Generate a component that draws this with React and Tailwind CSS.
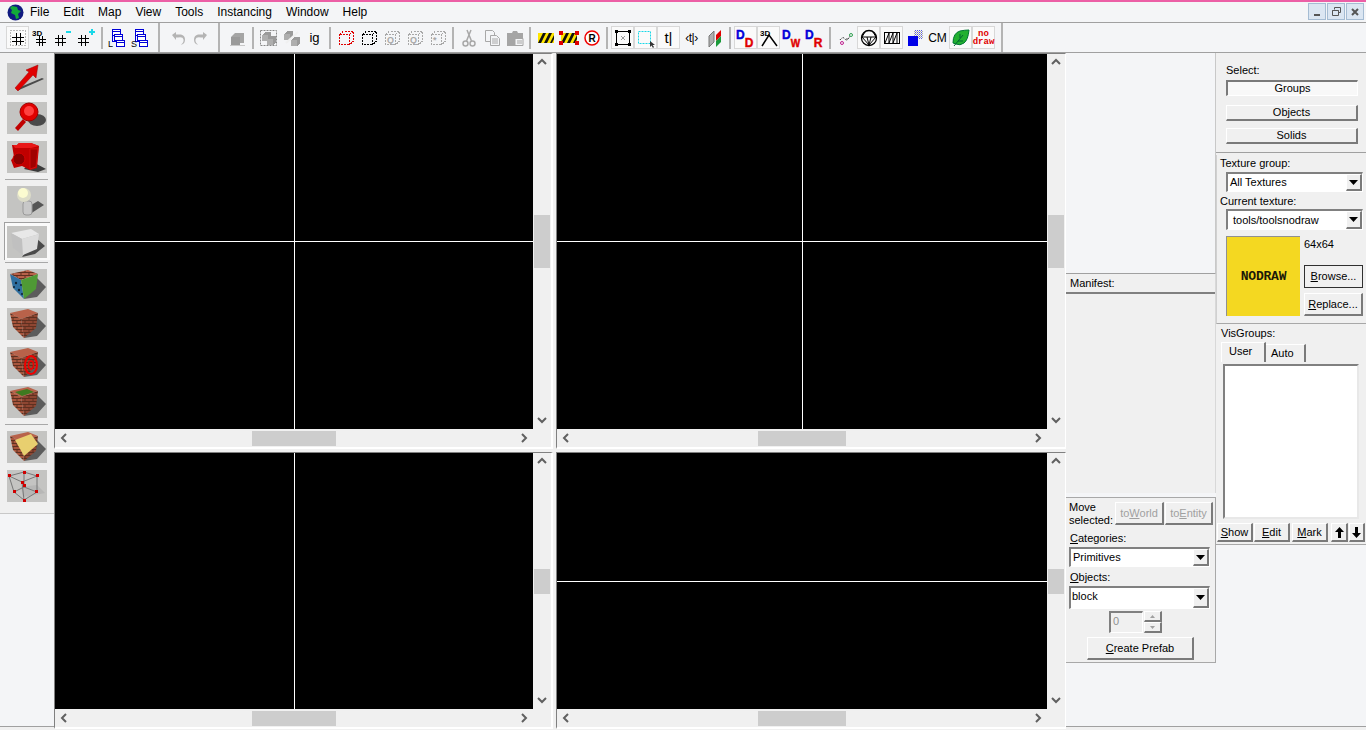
import React from 'react';

const raised = 'border-t border-l border-t-white border-l-white border-r-2 border-b-2 border-r-[#7a7a7a] border-b-[#7a7a7a] bg-[#f0f0f0]';
const sunken = 'border-t-2 border-l-2 border-t-[#808080] border-l-[#808080] border-r border-b border-r-white border-b-white';

/* ---------- small helpers for toolbar drawings ---------- */
const Svg = ({ children, w = 20, h = 20 }) => (
  <svg width={w} height={h} viewBox={`0 0 ${w} ${h}`}>{children}</svg>
);

const GridLines = ({ x = 4, y = 5, s = 12, c = '#000' }) => (
  <g stroke={c} strokeWidth="1" shapeRendering="crispEdges">
    <path d={`M${x} ${y + s / 3}h${s}M${x} ${y + (2 * s) / 3}h${s}M${x + s / 3} ${y}v${s}M${x + (2 * s) / 3} ${y}v${s}`} />
  </g>
);

const Stack = ({ letter }) => (
  <Svg>
    <g transform="translate(-2 0)">
      <g fill="#fff" stroke="#0000d8" strokeWidth="1" shapeRendering="crispEdges">
        <rect x="6.5" y="1.5" width="8" height="6" />
        <path d="M6.5 3.5h8" />
        <rect x="8.5" y="6.5" width="8" height="6" />
        <path d="M8.5 8.5h8" />
        <rect x="10.5" y="12.5" width="8" height="6" />
        <path d="M10.5 14.5h8" />
        <path d="M6.5 7.5v6h4" fill="none" />
      </g>
      <text x="2" y="19" fontSize="9" fontFamily="Liberation Sans" fill="#000">{letter}</text>
    </g>
  </Svg>
);

const DashCube = ({ c, mark }) => (
  <Svg>
    <g fill="none" stroke={c} strokeWidth="1.2" strokeDasharray="2 1" shapeRendering="crispEdges">
      <rect x="3.5" y="6.5" width="10" height="10" />
      <path d="M3.5 6.5l4-3h10v10l-4 3M13.5 6.5l4-3" />
    </g>
    {mark && <text x="5" y="15" fontSize="9" fontWeight="bold" fontFamily="Liberation Sans" fill={c}>{mark}</text>}
  </Svg>
);

const GrayCube = ({ x = 0, y = 0, c = '#9a9a9a' }) => (
  <g transform={`translate(${x} ${y})`} shapeRendering="crispEdges">
    <path d="M0 3l3-3h6v6l-3 3H0z" fill={c} />
    <path d="M0 3h6v6H0z" fill="#aeaeae" />
  </g>
);

const Pair = ({ top, bottom, size = 12 }) => (
  <svg width="20" height="20" viewBox="0 0 20 20" className="overflow-visible">
    <text x="0" y="11" fontSize="12" fontWeight="bold" fontFamily="Liberation Sans" fill="#0000d8" stroke="#0000d8" strokeWidth=".4">{top}</text>
    <text x="8.7" y="19" fontSize={size} fontWeight="bold" fontFamily="Liberation Sans" fill="#e00000" stroke="#e00000" strokeWidth=".4">{bottom}</text>
  </svg>
);

const Stripes = ({ corners }) => (
  <svg width="20" height="16" viewBox="0 0 20 16">
    <rect x="2" y="3" width="16" height="10" fill="#ffe600" />
    <path d="M2 13l5-10h3l-5 10zM8 13l5-10h3l-5 10zM14 13l4-8v4l-2 4z" fill="#111" />
    {corners && (
      <g fill="#e00000">
        <rect x="0" y="1" width="4" height="4" />
        <rect x="16" y="1" width="4" height="4" />
        <rect x="0" y="11" width="4" height="4" />
        <rect x="16" y="11" width="4" height="4" />
      </g>
    )}
  </svg>
);

const Text = ({ children, cls = 'text-[14px]' }) => (
  <span className={`${cls} leading-none text-black`}>{children}</span>
);

const TOOLBAR = [
  { pressed: true, el: <Svg><rect x="2.5" y="2.5" width="15" height="15" fill="none" stroke="#777" strokeDasharray="1 2" /><GridLines /></Svg> },
  { el: <Svg><text x="1" y="8" fontSize="8" fontWeight="bold" fontFamily="Liberation Sans">3D</text><GridLines x={5} y={8} s={10} /></Svg> },
  { el: <Svg><GridLines x={1} y={7} s={11} /><rect x="12" y="3" width="5" height="2" fill="#19d8e8" /></Svg> },
  { el: <Svg><GridLines x={1} y={7} s={11} /><path d="M12 4h6M15 1v6" stroke="#19d8e8" strokeWidth="2" /></Svg> },
  'sep',
  { el: <Stack letter="L" /> },
  { el: <Stack letter="S" /> },
  'bar',
  { el: <Svg><path d="M4 7l4-3v2.5h5q4 1 4 5t-3 5h-1q3-2 2.500-5T10 9.500H8V12z" fill="#b4b4b4" /></Svg> },
  { el: <Svg><path d="M16 7l-4-3v2.500H7q-4 1-4 5t3 5h1q-3-2-2.500-5T10 9.500h2V12z" fill="#b4b4b4" /></Svg> },
  'bar',
  { el: <Svg><path d="M3 9l4-4h9v10H3z" fill="#a5a5a5" /><path d="M3 9h9v8H3z" fill="#9a9a9a" /><path d="M2 17h15v1H2z" fill="#c8c8c8" /></Svg> },
  'sep',
  { el: <Svg><rect x="1.500" y="2.500" width="16" height="15" fill="none" stroke="#888" strokeDasharray="2 1" /><GrayCube x={3} y={4} /><GrayCube x={8} y={8} /></Svg> },
  { el: <Svg><GrayCube x={2} y={3} /><GrayCube x={9} y={9} /><path d="M4 15l12-11" stroke="#f0f0f0" strokeWidth="2" /></Svg> },
  { el: <Text cls="text-[13px] font-['Liberation_Sans']">ig</Text> },
  'sep',
  { el: <DashCube c="#e00000" /> },
  { el: <DashCube c="#000" /> },
  { el: <DashCube c="#a8a8a8" mark="Q" /> },
  { el: <DashCube c="#a8a8a8" mark="Q" /> },
  { el: <DashCube c="#a8a8a8" mark="*" /> },
  'sep',
  { el: <Svg><g fill="none" stroke="#a8a8a8" strokeWidth="1.500"><circle cx="6.500" cy="15.500" r="2.500" /><circle cx="13.500" cy="15.500" r="2.500" /><path d="M7.500 13L12 2M12.500 13L8 2" /></g></Svg> },
  { el: <Svg><g fill="#f4f5f7" stroke="#a8a8a8"><path d="M3.500 2.500h7l2 2v9h-9z" /><path d="M8.500 7.500h6l3 3v7h-9z" /><path d="M10 11h6M10 13h6M10 15h6" /></g></Svg> },
  { el: <Svg><path d="M2 5h5l1-2h4l1 2h5v13H2z" fill="#a5a5a5" /><path d="M10 10.500h8v7h-8z" fill="#f4f5f7" stroke="#a5a5a5" /><path d="M12 13h5M12 15h5" stroke="#a5a5a5" /></Svg> },
  'sep',
  { el: <Stripes /> },
  { el: <Stripes corners /> },
  { el: <Svg><circle cx="10" cy="10" r="7" fill="#fff" stroke="#f00000" strokeWidth="1.500" /><text x="6.500" y="13.500" fontSize="10" fontWeight="bold" fontFamily="Liberation Sans">R</text></Svg> },
  'sep',
  { pressed: true, el: <Svg><rect x="3.500" y="3.500" width="13" height="13" fill="none" stroke="#000" /><g fill="#000"><rect x="2" y="2" width="3" height="3" /><rect x="15" y="2" width="3" height="3" /><rect x="2" y="15" width="3" height="3" /><rect x="15" y="15" width="3" height="3" /></g><path d="M8 8l4 4M12 8l-4 4" stroke="#999" /></Svg> },
  { pressed: true, el: <Svg><rect x="2.500" y="3.500" width="12" height="12" fill="none" stroke="#19d8e8" strokeDasharray="2 1" /><path d="M14 13v6l1.500-1.500L17 20l1-1-1.500-2H19z" fill="#333" /></Svg> },
  { pressed: true, el: <Text cls="text-[15px] font-['Liberation_Sans']">t|</Text> },
  { el: <Text cls="text-[12px] font-['Liberation_Sans'] tracking-[-0.5px]">‹t|›</Text> },
  { el: <Svg><path d="M4 8l5-5v11l-5 5z" fill="#b0b0b0" stroke="#777" /><path d="M11 7l5-5v6l-5 5z" fill="#e00000" /><path d="M11 13l5-5v6l-5 5z" fill="#1a9a3a" /></Svg> },
  'sep',
  { pressed: true, el: <Pair top="D" bottom="D" /> },
  { pressed: true, el: <Svg><text x="1" y="8" fontSize="8" fontWeight="bold" fontFamily="Liberation Sans">3D</text><path d="M3 18l7-11 8 11" fill="none" stroke="#000" strokeWidth="1.500" /></Svg> },
  { el: <Pair top="D" bottom="W" size={10} /> },
  { el: <Pair top="D" bottom="R" /> },
  'sep',
  { el: <Svg><path d="M4 12q3-4 5-1t5-3" fill="none" stroke="#000" strokeDasharray="1 1" /><circle cx="6" cy="15" r="1.500" fill="none" stroke="#c02090" /><circle cx="15" cy="7" r="1.500" fill="none" stroke="#2fa050" /><circle cx="11" cy="11" r="1" fill="#888" /></Svg> },
  { pressed: true, el: <Svg><circle cx="10" cy="10" r="7.500" fill="none" stroke="#000" strokeWidth="1.300" /><path d="M3 9h14M6 4l-3 5 7 8 7-8-3-5M8 9l2 8 2-8" fill="none" stroke="#000" /></Svg> },
  { pressed: true, el: <Svg><rect x="2.500" y="4.500" width="15" height="11" fill="none" stroke="#000" /><path d="M3 15l4-10v10l4-10v10l4-10v10" fill="none" stroke="#000" /></Svg> },
  { el: <Svg><defs><pattern id="chk" width="2" height="2" patternUnits="userSpaceOnUse"><rect width="1" height="1" fill="#5a5ae0" /><rect x="1" y="1" width="1" height="1" fill="#aaa" /></pattern></defs><rect x="9" y="2" width="9" height="9" fill="url(#chk)" /><rect x="3" y="8" width="10" height="10" fill="#0000e8" /></Svg> },
  { el: <Text cls="text-[12px] font-['Liberation_Sans']">CM</Text> },
  { pressed: true, el: <Svg><path d="M2 15Q2 5 9 3q5-1 9-1-1 10-5 13t-8 1z" fill="#22b030" stroke="#073" /><path d="M3 18l9-11M7 13h5M9 10V6" stroke="#063" fill="none" /></Svg> },
  { pressed: true, el: <div className="flex flex-col items-center font-['Liberation_Mono'] font-bold text-[9px] leading-[8px] text-[#e00000]"><span>no</span><span>draw</span></div> },
  'bar',
];

/* ---------- left tool palette pictures, 40x32 ---------- */
const Bricks = ({ id, c = '#a8553c' }) => (
  <pattern id={id} width="8" height="6" patternUnits="userSpaceOnUse">
    <rect width="8" height="6" fill={c} />
    <path d="M0 .5h8M0 3.500h8M2 0v3M6 3v3" stroke="#5e3020" strokeWidth="1" />
  </pattern>
);

const Shadow = () => <path d="M29 8l10 10-9 10-13 2z" fill="#4a4a4a" opacity=".85" />;

const Cube = ({ top, left, right }) => (
  <>
    <Shadow />
    <path d="M3 5L21 1l10 4-17 6z" fill={top} />
    <path d="M3 5l11 6 3 19L6 19z" fill={left} />
    <path d="M14 11l17-6-2 15-12 10z" fill={right} />
  </>
);

const TOOLS = [
  <g key="arrow">
    <path d="M12 27L37 16l-2-1-24 10z" fill="#4a4a4a" />
    <path d="M8 25L22 9l-3-2L31 2l-2 13-3-3L11 28z" fill="#e00000" stroke="#a00000" strokeWidth=".5" />
  </g>,
  <g key="mag">
    <ellipse cx="30" cy="18" rx="9" ry="6" fill="#4a4a4a" />
    <path d="M8 26l8-9 3 3-8 9z" fill="#c00000" />
    <circle cx="22" cy="10" r="9" fill="#e00000" stroke="#a00000" />
    <circle cx="22" cy="9" r="5" fill="#ff4040" />
  </g>,
  <g key="cam">
    <path d="M24 20l15 8-8 3-14-3z" fill="#3a3a3a" />
    <path d="M5 4h5l2-2h12l8 3-2 22-7 2-8-4-8 2-3-8 3-3z" fill="#c00000" />
    <path d="M6 4h4l2-2h12l8 3-8 2H8z" fill="#e81818" />
    <circle cx="12" cy="18" r="6" fill="#8a0000" stroke="#d80000" />
    <path d="M23 8h8l-2 18-6 2z" fill="#a00000" stroke="#e01010" strokeWidth=".7" />
  </g>,
  'sep',
  <g key="bulb">
    <path d="M23 28l14-9-6-4-10 6z" fill="#555" />
    <rect x="16" y="15" width="9" height="14" rx="3" fill="#c8c8c8" stroke="#999" />
    <circle cx="17" cy="9" r="7" fill="#dcdcc8" />
    <circle cx="16" cy="7" r="5" fill="#fbfbd0" />
  </g>,
  'cube',
  'sep',
  <g key="tex">
    <Cube top="url(#brick1)" left="#2f6fa0" right="#4f9a35" />
    <g fill="#123">
      <circle cx="9" cy="14" r="1.200" /><circle cx="12" cy="21" r="1.200" /><circle cx="7" cy="18" r="1" /><circle cx="14" cy="16" r="1" /><circle cx="15" cy="25" r="1" />
    </g>
  </g>,
  <g key="brick"><Cube top="#b8624a" left="url(#brick2)" right="url(#brick3)" /></g>,
  <g key="target">
    <Cube top="#b8624a" left="url(#brick2)" right="url(#brick3)" />
    <ellipse cx="24" cy="18" rx="6" ry="9" fill="none" stroke="#f00000" strokeWidth="2" />
    <ellipse cx="24" cy="18" rx="2.500" ry="4" fill="none" stroke="#f00000" strokeWidth="1.500" />
  </g>,
  <g key="green">
    <Cube top="#b8624a" left="url(#brick2)" right="url(#brick3)" />
    <path d="M8 6l12-3 7 3-12 4z" fill="#3e7a20" />
  </g>,
  'sep',
  <g key="overlay">
    <Cube top="#b8624a" left="url(#brick2)" right="url(#brick3)" />
    <path d="M8 9L24 3l7 10-14 12z" fill="#e8cf6f" />
  </g>,
  <g key="wire">
    <path d="M14 17l16-2 8 8-22 4z" fill="#aaa" opacity=".5" />
    <g fill="none" stroke="#777" strokeWidth="1">
      <path d="M2 6L17 2l13 4-15 6zM2 6l5 16 10 8 13-8 0-16M15 12l2 18M7 22l10-5 13 5M17 2l0 15" />
    </g>
    <g fill="#d00000">
      <rect x="1" y="4" width="3" height="3" /><rect x="16" y="1" width="3" height="3" /><rect x="29" y="4" width="3" height="3" /><rect x="14" y="11" width="3" height="3" />
      <rect x="6" y="20" width="3" height="3" /><rect x="16" y="14" width="3" height="3" /><rect x="28" y="20" width="3" height="3" /><rect x="16" y="29" width="3" height="3" />
    </g>
  </g>,
];

const ToolIcon = ({ children }) => (
  <svg width="40" height="32" viewBox="0 0 40 32" className="block bg-[#c4c4c2]">{children}</svg>
);

const LeftPalette = () => (
  <div className="h-[461px] flex flex-col items-center bg-[#f0f0f0] border-b border-b-[#c8c8c8] pt-[10px] pr-[1px]">
    <svg width="0" height="0" className="absolute">
      <defs>
        <Bricks id="brick1" c="#b8624a" />
        <Bricks id="brick2" />
        <Bricks id="brick3" c="#8e4632" />
      </defs>
    </svg>
    {TOOLS.map((t, i) => {
      if (t === 'sep') return <div key={i} className="w-[43px] h-[1px] bg-[#a8a8a8] mb-[6px] -mt-[1px]" />;
      if (t === 'cube') {
        return (
          <div key={i} className="w-[46px] h-[38px] -mt-[3px] mb-[3px] flex items-center justify-center bg-[#fafafa] border-t border-l border-[#a0a0a0] border-r-white border-b-white">
            <ToolIcon>
              <path d="M29 12l9 8-10 8-13 3z" fill="#4a4a4a" />
              <path d="M4 7l20-4 8 5-17 5z" fill="#e8e8e8" />
              <path d="M4 7l11 6 1 16L6 22z" fill="#c0c0c0" />
              <path d="M15 13l17-5-2 15-14 6z" fill="#dcdcdc" />
            </ToolIcon>
          </div>
        );
      }
      return <div key={i} className="mb-[7px]"><ToolIcon>{t}</ToolIcon></div>;
    })}
  </div>
);

/* ---------- scrollbars and map views ---------- */
const Chevron = ({ dir }) => {
  const d = { up: 'M2 7l4-4 4 4', down: 'M2 4l4 4 4-4', left: 'M8 2L4 6l4 4', right: 'M4 2l4 4-4 4' }[dir];
  return (
    <svg width="12" height="12" viewBox="0 0 12 12" className="shrink-0">
      <path d={d} fill="none" stroke="#606060" strokeWidth="2" />
    </svg>
  );
};

const MapView = ({ width, vThumb, hThumb, cross, right }) => (
  <div className={`h-full flex flex-col border-t border-l border-t-[#808080] border-l-[#808080] border-b-2 border-b-white ${right ? 'border-r border-r-white' : 'border-r-2 border-r-white'}`} style={{ width }}>
    <div className="flex-1 flex min-h-0">
      <div className="flex-1 relative bg-black">
        {cross.includes('v') && <div className="absolute top-0 bottom-0 left-1/2 w-[1px] bg-white" />}
        {cross.includes('h') && <div className="absolute left-0 right-0 top-[calc(50%-0.5px)] h-[1px] bg-white" />}
      </div>
      <div className="w-[18px] bg-[#f0f0f0] flex flex-col items-center justify-between py-[3px]">
        <Chevron dir="up" />
        <div className="w-[16px] bg-[#cdcdcd]" style={{ height: vThumb }} />
        <Chevron dir="down" />
      </div>
    </div>
    <div className="h-[18px] flex">
      <div className="flex-1 bg-[#f0f0f0] flex items-center justify-between px-[3px]">
        <Chevron dir="left" />
        <div className="h-[15px] bg-[#cdcdcd]" style={{ width: hThumb }} />
        <Chevron dir="right" />
      </div>
      <div className="w-[18px] bg-[#f0f0f0]" />
    </div>
  </div>
);

/* ---------- win32 style controls ---------- */
const Btn = ({ cls, children, disabled }) => (
  <div className={`${raised} ${cls} flex items-center justify-center ${disabled ? 'text-[#a0a0a0]' : 'text-black'}`}>{children}</div>
);

const Combo = ({ cls, h, text, textCls = 'pl-[2px]' }) => (
  <div className={`${sunken} ${cls} bg-white flex items-center justify-between`} style={{ height: h }}>
    <span className={textCls}>{text}</span>
    <div className={`${raised} w-[16px] h-full flex items-center justify-center`}>
      <svg width="9" height="5" viewBox="0 0 9 5"><path d="M0 0h9L4.500 5z" fill="#000" /></svg>
    </div>
  </div>
);

const WinBtn = ({ children }) => (
  <div className="w-[18px] h-[17px] bg-[#dbe6f2] border border-[#a5bcd3] flex items-center justify-center">{children}</div>
);

export default function App() {
  return (
    <div className="w-[1366px] h-[730px] overflow-hidden flex flex-col bg-[#f4f5f7] font-['Liberation_Sans',sans-serif] text-[11px] text-black">
      <div className="h-[2px] bg-[#ec5fa6]" />

      {/* menu */}
      <div className="h-[21px] flex items-center border-b border-b-[#a0a0a0] pl-[7px] pr-[2px]">
        <svg width="17" height="17" viewBox="0 0 17 17" className="mr-[6px]">
          <circle cx="8.500" cy="8.500" r="8" fill="#101a80" />
          <path d="M5 2l5 1 1 3 3 1-3 3 1 4-3 1-1-4-4-2 1-3-2-2z" fill="#12a83a" />
        </svg>
        <div className="flex gap-[14px] text-[12px]">
          {['File', 'Edit', 'Map', 'View', 'Tools', 'Instancing', 'Window', 'Help'].map(m => <span key={m}>{m}</span>)}
        </div>
        <div className="ml-auto flex gap-[1px] -mt-[1px]">
          <WinBtn><div className="w-[6px] h-[2px] mt-[6px] bg-[#555]" /></WinBtn>
          <WinBtn>
            <svg width="9" height="9" viewBox="0 0 9 9"><path d="M2.500 2.500V.5h6v5H6.500M.5 3.500h6v5h-6zM.5 3.500h6" fill="none" stroke="#555" /></svg>
          </WinBtn>
          <WinBtn>
            <svg width="8" height="8" viewBox="0 0 8 8"><path d="M1 1l6 6M7 1L1 7" stroke="#555" strokeWidth="2" /></svg>
          </WinBtn>
        </div>
      </div>

      {/* toolbar */}
      <div className="h-[30px] flex items-center pl-[6px] border-b border-b-[#a0a0a0]">
        {TOOLBAR.map((item, i) => {
          if (item === 'sep') {
            return <div key={i} className="w-[8px] h-[22px] flex justify-center"><div className="w-[2px] h-full bg-[#b4b4b4]" /></div>;
          }
          if (item === 'bar') {
            return <div key={i} className="w-[14px] h-full flex justify-center"><div className="w-[2px] h-full bg-[#b4b4b4]" /></div>;
          }
          return (
            <div key={i} className={`w-[23px] h-[23px] flex items-center justify-center ${item.pressed ? 'bg-[#fafafa] border border-[#d8d8d8]' : ''}`}>
              {item.el}
            </div>
          );
        })}
      </div>

      <div className="h-[677px] flex">
        {/* left tools */}
        <div className="w-[54px] shrink-0 bg-[#f0f0f0]">
          <LeftPalette />
          <div className="h-[213px] bg-[#f4f5f7] border-b border-b-[#a0a0a0]" />
        </div>

        {/* map views */}
        <div className="w-[1012px] shrink-0 flex flex-col bg-[#f0f0f0]">
          <div className="h-[396px] flex gap-[3px]">
            <MapView width={499} vThumb={53} hThumb={84} cross="vh" />
            <MapView width={510} vThumb={53} hThumb={88} cross="vh" right />
          </div>
          <div className="h-[277px] mt-[3px] flex gap-[3px]">
            <MapView width={499} vThumb={25} hThumb={84} cross="v" />
            <MapView width={510} vThumb={25} hThumb={88} cross="h" right />
          </div>
        </div>

        {/* middle side panel */}
        <div className="w-[150px] shrink-0 flex flex-col bg-[#f0f0f0]">
          <div className="h-[220px] bg-[#f4f5f7] border-r border-r-[#c8c8c8]" />
          <div className="h-[220px] flex flex-col border-t border-t-[#a0a0a0] border-r border-r-[#d8d8d8] bg-[#f0f0f0]">
            <div className="h-[19px] pl-[4px] mt-[1px] border-b-2 border-b-[#808080]">Manifest:</div>
          </div>
          <div className="h-[4px] bg-[#f4f5f7]" />
          <div className="h-[166px] bg-[#f0f0f0] border-t border-b border-r border-[#a8a8a8] pl-[3px] flex flex-col">
            <div className="flex h-[25px] mt-[4px]">
              <div className="leading-[13px] w-[46px] -mt-[1px]">Move<br />selected:</div>
              <Btn disabled cls="w-[49px] h-[23px]"><span>to<u>W</u>orld</span></Btn>
              <Btn disabled cls="w-[48px] h-[23px] ml-[1px]"><span>to<u>E</u>ntity</span></Btn>
            </div>
            <div className="mt-[5px] pl-[1px] leading-[13px]"><u>C</u>ategories:</div>
            <Combo cls="w-[141px] mt-[2px]" h={20} text="Primitives" textCls="pl-[2px]" />
            <div className="mt-[4px] pl-[1px] leading-[13px]"><u>O</u>bjects:</div>
            <Combo cls="w-[141px] mt-[2px]" h={23} text="block" textCls="pl-[1px] -mt-[4px]" />
            <div className="flex mt-[2px] h-[22px] pl-[40px]">
              <div className={`${sunken} w-[34px] bg-[#f0f0f0] pl-[2px] text-[#909090]`}>0</div>
              <div className="w-[18px] ml-[1px] flex flex-col">
                <div className={`${raised} flex-1 flex items-center justify-center`}><svg width="5" height="3" viewBox="0 0 5 3"><path d="M0 3h5L2.500 0z" fill="#a0a0a0" /></svg></div>
                <div className={`${raised} flex-1 flex items-center justify-center`}><svg width="5" height="3" viewBox="0 0 5 3"><path d="M0 0h5L2.500 3z" fill="#a0a0a0" /></svg></div>
              </div>
            </div>
            <div className="mt-[4px] pl-[18px]">
              <Btn cls="w-[107px] h-[23px]"><span><u>C</u>reate Prefab</span></Btn>
            </div>
          </div>
          <div className="h-[64px] bg-[#f4f5f7] border-b border-b-[#a0a0a0]" />
        </div>

        {/* right side panel */}
        <div className="w-[150px] shrink-0 flex flex-col bg-[#f0f0f0]">
          <div className="h-[100px] bg-[#f0f0f0] border-b border-b-[#a0a0a0] pl-[10px] pt-[11px]">
            <div className="leading-[13px]">Select:</div>
            <div className="mt-[3px] w-[132px] h-[16px] border-t-2 border-l-2 border-t-[#7a7a7a] border-l-[#7a7a7a] border-r border-b border-r-white border-b-white bg-[#f8f8f8] flex items-center justify-center">Groups</div>
            <Btn cls="w-[132px] h-[16px] mt-[9px]">Objects</Btn>
            <Btn cls="w-[132px] h-[16px] mt-[7px]">Solids</Btn>
          </div>

          <div className="h-[169px] mt-[2px] bg-[#f0f0f0] border-b border-b-[#a8a8a8] border-l border-l-[#d0d0d0] pl-[3px] pt-[2px]">
            <div className="leading-[13px]">Texture group:</div>
            <Combo cls="w-[137px] ml-[6px] mt-[2px]" h={20} text="All Textures" />
            <div className="leading-[13px] mt-[3px]">Current texture:</div>
            <Combo cls="w-[137px] ml-[6px] mt-[1px]" h={21} text="tools/toolsnodraw" textCls="pl-[5px]" />
            <div className="flex mt-[6px] ml-[6px]">
              <div className="w-[74px] h-[80px] bg-[#f4d821] border-t border-l border-t-[#909090] border-l-[#909090] flex items-center justify-center font-bold text-[13px] tracking-[-0.2px] font-['Liberation_Mono'] text-[#1c1a08]">NODRAW</div>
              <div className="ml-[4px] flex flex-col">
                <div className="h-[29px] pt-[2px] leading-[13px]">64x64</div>
                <div className="w-[59px] h-[23px] border border-[#303030] flex items-center justify-center"><u>B</u>rowse...</div>
                <Btn cls="w-[59px] h-[23px] mt-[5px]"><span><u>R</u>eplace...</span></Btn>
              </div>
            </div>
          </div>

          <div className="h-[221px] bg-[#f0f0f0] border-b border-b-[#a8a8a8] flex flex-col">
            <div className="pl-[5px] pt-[3px] leading-[13px]">VisGroups:</div>
            <div className="flex items-end pl-[5px] mt-[2px] h-[20px]">
              <div className="w-[45px] h-[20px] border-t border-l border-r-2 border-t-white border-l-white border-r-[#7a7a7a] flex items-center pl-[7px] pb-[2px]">User</div>
              <div className="w-[40px] h-[18px] border-t border-r-2 border-t-white border-r-[#7a7a7a] flex items-center pl-[5px]">Auto</div>
            </div>
            <div className="mx-[7px] mt-[2px] w-[136px] h-[155px] border-t-2 border-l-2 border-t-[#808080] border-l-[#808080] border-r-2 border-b-2 border-r-[#e8e8e8] border-b-[#e8e8e8] bg-white" />
            <div className="flex mt-[4px] pl-[1px] h-[20px]">
              <Btn cls="w-[36px] h-[19px]"><span><u>S</u>how</span></Btn>
              <Btn cls="w-[36px] h-[19px] ml-[1px]"><span><u>E</u>dit</span></Btn>
              <Btn cls="w-[36px] h-[19px] ml-[2px]"><span><u>M</u>ark</span></Btn>
              <Btn cls="w-[17px] h-[19px] ml-[3px]"><svg width="9" height="11" viewBox="0 0 9 11"><path d="M4.500 0L9 5H6v6H3V5H0z" fill="#000" /></svg></Btn>
              <Btn cls="w-[16px] h-[19px] ml-[1px]"><svg width="9" height="11" viewBox="0 0 9 11"><path d="M4.500 11L9 6H6V0H3v6H0z" fill="#000" /></svg></Btn>
            </div>
          </div>
          <div className="h-[182px] bg-[#f4f5f7] border-b border-b-[#a0a0a0]" />
        </div>
      </div>
    </div>
  );
}
